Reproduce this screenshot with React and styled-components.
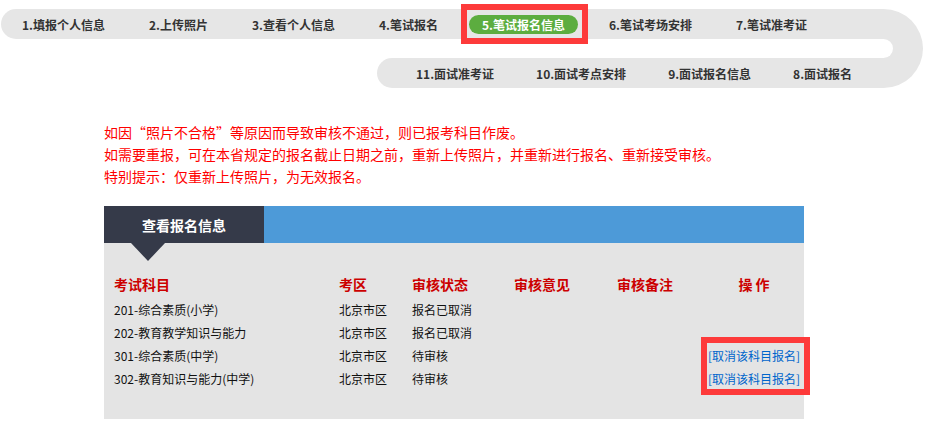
import React from "react";
import styled, { createGlobalStyle } from "styled-components";

const Global = createGlobalStyle`
  html, body { margin: 0; padding: 0; background: #fff; }
  body { font-family: "Noto Sans CJK SC", "Liberation Sans", sans-serif; }
  * { box-sizing: border-box; }
`;

const Page = styled.div`
  width: 927px;
  padding-top: 9px;
`;

const StepsWrap = styled.div`
  display: flex;
  margin-left: 1px;
`;

const StepRows = styled.div`
  display: flex;
  flex-direction: column;
  gap: 19px;
  width: 882px;
`;

const StepRow = styled.div`
  display: flex;
  align-items: center;
  gap: ${(p) => p.$gap}px;
  height: 30px;
  margin-left: ${(p) => p.$offset}px;
  padding-left: ${(p) => p.$pad}px;
  background: #e6e6e6;
  border-radius: 15px 0 0 15px;
`;

const Curve = styled.div`
  width: 40px;
  height: 79px;
  border: 30px solid #e6e6e6;
  border-left: 0;
  border-radius: 0 40px 40px 0;
`;

const Step = styled.div`
  position: relative;
  display: flex;
  align-items: center;
  height: 19px;
  padding: 0 13px;
  font-size: 12px;
  font-weight: bold;
  white-space: nowrap;
  color: ${(p) => (p.$active ? "#fff" : "#333")};
  background: ${(p) => (p.$active ? "#5cad3f" : "transparent")};
  border-radius: 10px;
`;

const Mark = styled.div`
  position: absolute;
  left: ${(p) => p.$l}px;
  top: ${(p) => p.$t}px;
  width: ${(p) => p.$w}px;
  height: ${(p) => p.$h}px;
  border: 6px solid #fd3a3a;
  pointer-events: none;
`;

const Notice = styled.div`
  margin: 33px 0 0 104px;
  font-size: 14px;
  line-height: 22px;
  color: #ff0000;
`;

const Panel = styled.section`
  width: 700px;
  margin: 19px 0 0 104px;
  background: #e4e4e4;
  position: relative;
`;

const PanelHead = styled.div`
  display: flex;
  height: 37px;
  background: #4d9ad8;
`;

const Tab = styled.div`
  position: relative;
  width: 160px;
  display: flex;
  align-items: center;
  justify-content: center;
  background: #353a49;
  color: #fff;
  font-size: 14px;
  font-weight: bold;
  &::after {
    content: "";
    position: absolute;
    left: 27px;
    top: 37px;
    border-left: 17.5px solid transparent;
    border-right: 17.5px solid transparent;
    border-top: 18px solid #353a49;
  }
`;

const Table = styled.div`
  position: relative;
  display: grid;
  grid-template-columns: 225px 73px 102px 103px 87px 100px;
  grid-template-rows: 29px;
  grid-auto-rows: 23px;
  padding: 26px 0 29px 10px;
`;

const HeadCell = styled.div`
  display: flex;
  align-items: center;
  justify-content: ${(p) => (p.$center ? "center" : "flex-start")};
  font-size: 14px;
  font-weight: bold;
  color: #cc0000;
  white-space: pre;
`;

const Cell = styled.div`
  display: flex;
  align-items: center;
  justify-content: ${(p) => (p.$center ? "center" : "flex-start")};
  font-size: 12px;
  color: #111;
  white-space: nowrap;
`;

const Link = styled.a`
  color: #0066cc;
  text-decoration: none;
  font-size: 12px;
  cursor: pointer;
`;

const row1 = [
  "1.填报个人信息",
  "2.上传照片",
  "3.查看个人信息",
  "4.笔试报名",
  "5.笔试报名信息",
  "6.笔试考场安排",
  "7.笔试准考证",
];
const row2 = ["11.面试准考证", "10.面试考点安排", "9.面试报名信息", "8.面试报名"];

const heads = ["考试科目", "考区", "审核状态", "审核意见", "审核备注", "操 作"];

const rows = [
  { name: "201-综合素质(小学)", area: "北京市区", status: "报名已取消", op: false },
  { name: "202-教育教学知识与能力", area: "北京市区", status: "报名已取消", op: false },
  { name: "301-综合素质(中学)", area: "北京市区", status: "待审核", op: true },
  { name: "302-教育知识与能力(中学)", area: "北京市区", status: "待审核", op: true },
];

export default function App() {
  return (
    <Page>
      <Global />
      <StepsWrap>
        <StepRows>
          <StepRow $offset={0} $pad={8} $gap={18}>
            {row1.map((s, i) =>
              i === 4 ? (
                <Step key={s} $active>
                  {s}
                  <Mark $l={-8} $t={-11} $w={127} $h={40} />
                </Step>
              ) : (
                <Step key={s}>{s}</Step>
              )
            )}
          </StepRow>
          <StepRow $offset={376} $pad={26} $gap={16}>
            {row2.map((s) => (
              <Step key={s}>{s}</Step>
            ))}
          </StepRow>
        </StepRows>
        <Curve />
      </StepsWrap>

      <Notice>
        <div>如因“照片不合格”等原因而导致审核不通过，则已报考科目作废。</div>
        <div>如需要重报，可在本省规定的报名截止日期之前，重新上传照片，并重新进行报名、重新接受审核。</div>
        <div>特别提示：仅重新上传照片，为无效报名。</div>
      </Notice>

      <Panel>
        <PanelHead>
          <Tab>查看报名信息</Tab>
        </PanelHead>
        <Table>
          {heads.map((h, i) => (
            <HeadCell key={h} $center={i === 5}>
              {h}
            </HeadCell>
          ))}
          {rows.map((r) => (
            <React.Fragment key={r.name}>
              <Cell>{r.name}</Cell>
              <Cell>{r.area}</Cell>
              <Cell>{r.status}</Cell>
              <Cell />
              <Cell />
              <Cell $center>{r.op ? <Link>[取消该科目报名]</Link> : null}</Cell>
            </React.Fragment>
          ))}
          <Mark $l={597} $t={94} $w={109} $h={58} />
        </Table>
      </Panel>
    </Page>
  );
}
